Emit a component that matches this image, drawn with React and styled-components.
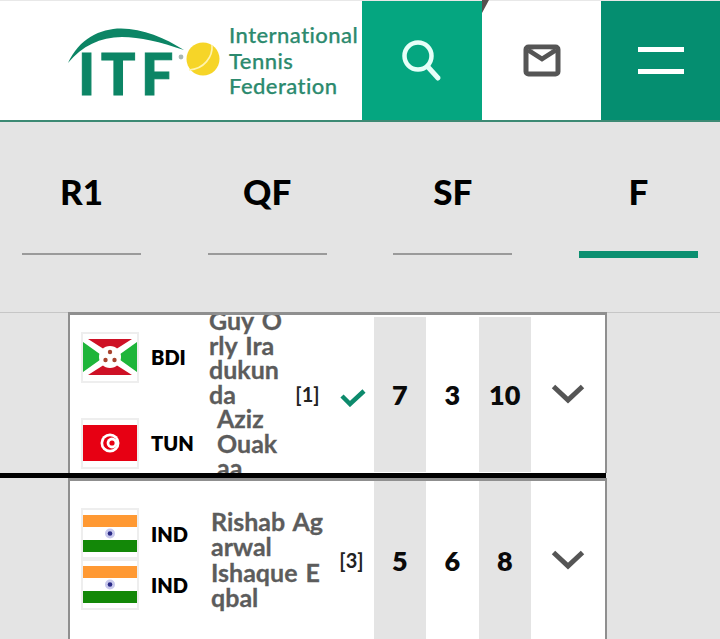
import React from "react";
import styled, { createGlobalStyle } from "styled-components";

const Global = createGlobalStyle`
  html, body { margin: 0; padding: 0; height: 639px; overflow: hidden; background: #e4e4e4; }
  body { font-family: Lato, "Noto Sans", sans-serif; }
  * { box-sizing: border-box; }
`;

const Page = styled.div`
  width: 720px;
  height: 639px;
  overflow: hidden;
  background: #e4e4e4;
`;

const Header = styled.header`
  position: relative;
  display: flex;
  height: 122px;
  background: #fff;
  border-top: 1px solid #e8e8e8;
  border-bottom: 2px solid #3c8a74;
`;

const Brand = styled.div`
  width: 362px;
  display: flex;
  align-items: flex-start;
  padding-left: 64px;
  overflow: hidden;
`;

const BrandName = styled.div`
  margin-left: 4px;
  padding-top: 21px;
  font-size: 22px;
  line-height: 25.5px;
  font-weight: 500;
  color: #2c8a6e;
  letter-spacing: 0.45px;
  white-space: nowrap;
  -webkit-text-stroke: 0.25px #2c8a6e;
`;

const NavButton = styled.div`
  width: ${(p) => p.$w}px;
  display: flex;
  align-items: center;
  justify-content: center;
  background: ${(p) => p.$bg};
`;

const Corner = styled.div`
  position: absolute;
  left: 482px;
  top: -1px;
  width: 7px;
  height: 13px;
  background: #55504f;
  clip-path: polygon(0 0, 100% 0, 0 100%);
`;

const Tabs = styled.nav`
  height: 190px;
  display: flex;
  justify-content: space-between;
  align-items: flex-start;
  padding: 0 22px;
  background: #e4e4e4;
`;

const Tab = styled.div`
  width: 119px;
  height: ${(p) => (p.$active ? 136 : 133)}px;
  padding-top: 49px;
  text-align: center;
  font-size: 35px;
  line-height: 40px;
  font-weight: 900;
  color: #000;
  border-bottom: ${(p) => (p.$active ? "7px solid #0b8f70" : "2px solid #9a9a9a")};
`;

const Rule = styled.div`
  height: 1px;
  background: #c6c6c6;
`;

const Match = styled.section`
  width: 539px;
  height: ${(p) => p.$h}px;
  margin-left: 68px;
  margin-top: ${(p) => (p.$first ? -1 : 0)}px;
  position: relative;
  display: flex;
  overflow: hidden;
  background: #fff;
  border-style: solid;
  border-color: #8f8f8f;
  border-width: 3px 2px 0 2px;
`;

const Players = styled.div`
  flex: 1;
  min-width: 0;
  display: flex;
  flex-direction: column;
  justify-content: center;
  padding-left: 11px;
  padding-bottom: ${(p) => p.$pb}px;
`;

const Player = styled.div`
  display: flex;
  flex-shrink: 0;
  align-items: center;
`;

const FlagBox = styled.div`
  width: 58px;
  height: 51px;
  flex-shrink: 0;
  display: flex;
  align-items: center;
  justify-content: center;
  background: #fff;
  border: 2px solid #eeeeee;
`;

const Code = styled.div`
  width: 70px;
  padding-left: 12px;
  flex-shrink: 0;
  font-size: 20px;
  font-weight: 800;
  color: #000;
`;

const Name = styled.div`
  width: ${(p) => p.$w}px;
  margin-left: ${(p) => p.$indent}px;
  font-size: 25px;
  line-height: 24.6px;
  font-weight: 700;
  color: #5c5c5c;
  word-break: break-all;
  word-spacing: 2px;
  -webkit-text-stroke: 0.3px #5c5c5c;
`;

const Meta = styled.div`
  display: flex;
  align-items: center;
  justify-content: flex-end;
  flex-shrink: 0;
`;

const Seed = styled.div`
  font-size: 20px;
  font-weight: 700;
  color: #222;
  margin-right: ${(p) => p.$gap}px;
`;

const Tick = styled.svg`
  width: 28px;
  height: 20px;
  margin-right: 7px;
  margin-top: 5px;
`;

const SetCell = styled.div`
  width: 52.5px;
  flex-shrink: 0;
  margin: ${(p) => (p.$flush ? "0" : "2px 0 1px")};
  display: flex;
  align-items: center;
  justify-content: center;
  font-size: 27px;
  font-weight: 800;
  color: #0a0a0a;
  background: ${(p) => (p.$shade ? "#e4e4e4" : "#fff")};
`;

const Toggle = styled.div`
  width: 74px;
  flex-shrink: 0;
  display: flex;
  align-items: center;
  justify-content: center;
`;

const Divider = styled.div`
  width: 606px;
  height: 5px;
  background: #000;
`;

const LogoMark = () => (
  <svg width="161" height="100" viewBox="64 0 161 100" style={{ flexShrink: 0 }}>
    <path d="M68 62 C 79 38, 100 27.5, 121 27.5 C 143 27.5, 165 37, 184 49 C 160 41, 140 36, 122 36 C 100 36, 82 45, 68 62 Z" fill="#0c8565" />
    <text y="94" fontFamily="Lato, sans-serif" fontWeight="900" fontSize="57" fill="#0c8565" stroke="#0c8565" strokeWidth="1">
      <tspan x="78">I</tspan>
      <tspan x="101">T</tspan>
      <tspan x="141">F</tspan>
    </text>
    <circle cx="181" cy="56" r="2.4" fill="#a9b7b3" />
    <circle cx="203" cy="58" r="16.5" fill="#f6d528" />
    <path d="M212 44 C 213 56, 204 68, 189 69" fill="none" stroke="#fff4b0" strokeWidth="1.6" />
  </svg>
);

const SearchIcon = () => (
  <svg width="44" height="46" viewBox="0 0 44 46">
    <circle cx="18" cy="18" r="13.5" fill="none" stroke="#e6fff8" strokeWidth="4.5" />
    <path d="M28 29 L38 40" stroke="#e6fff8" strokeWidth="5" strokeLinecap="round" />
  </svg>
);

const MailIcon = () => (
  <svg width="38" height="34" viewBox="0 0 38 34">
    <rect x="3" y="3" width="32" height="27" rx="2.5" fill="#fff" stroke="#555" strokeWidth="5" />
    <path d="M5 6 L19 15 L33 6" fill="none" stroke="#555" strokeWidth="4.5" />
    <path d="M10 5.5 H28 L19 11 Z" fill="#fff" />
  </svg>
);

const MenuIcon = () => (
  <svg width="46" height="28" viewBox="0 0 46 28">
    <rect x="0" y="0" width="46" height="5" fill="#fff" />
    <rect x="0" y="22" width="46" height="5" fill="#fff" />
  </svg>
);

const Burundi = () => (
  <svg width="54" height="36" viewBox="0 0 54 36">
    <rect width="54" height="36" fill="#fff" />
    <path d="M5 0 H49 L27 14 Z M5 36 H49 L27 22 Z" fill="#ce1126" />
    <path d="M0 3 L21 18 L0 33 Z M54 3 L33 18 L54 33 Z" fill="#1eb53a" />
    <circle cx="27" cy="18" r="11" fill="#fff" />
    <circle cx="27" cy="13" r="2.2" fill="#a8442f" />
    <circle cx="22.5" cy="21" r="2.2" fill="#a8442f" />
    <circle cx="31.5" cy="21" r="2.2" fill="#a8442f" />
  </svg>
);

const Tunisia = () => (
  <svg width="54" height="36" viewBox="0 0 54 36">
    <rect width="54" height="36" fill="#e70013" />
    <circle cx="27" cy="18" r="9.5" fill="#fff" />
    <circle cx="27" cy="18" r="6.8" fill="#e70013" />
    <circle cx="29" cy="18" r="5.4" fill="#fff" />
    <circle cx="29" cy="18" r="2.6" fill="#e70013" />
  </svg>
);

const India = () => (
  <svg width="54" height="37" viewBox="0 0 54 37">
    <rect width="54" height="12" fill="#ff9933" />
    <rect y="12" width="54" height="13" fill="#fff" />
    <rect y="25" width="54" height="12" fill="#138808" />
    <circle cx="27" cy="18.5" r="5" fill="#c9c9ec" />
    <circle cx="27" cy="18.5" r="2.3" fill="#2a2a86" />
  </svg>
);

const Chevron = () => (
  <svg width="34" height="20" viewBox="0 0 34 20">
    <path d="M2.5 2.5 L17 16 L31.5 2.5" fill="none" stroke="#555" strokeWidth="5" />
  </svg>
);

const flags = { BDI: Burundi, TUN: Tunisia, IND: India };

const matches = [
  {
    h: 161,
    pb: 0,
    seed: "[1]",
    won: true,
    sets: ["7", "3", "10"],
    players: [
      { code: "BDI", name: "Guy Orly Iradukunda", w: 74, indent: 0 },
      { code: "TUN", name: "Aziz Ouakaa", w: 62, indent: 8 },
    ],
  },
  {
    h: 161,
    pb: 2,
    seed: "[3]",
    won: false,
    sets: ["5", "6", "8"],
    players: [
      { code: "IND", name: "Rishab Agarwal", w: 118, indent: 2 },
      { code: "IND", name: "Ishaque Eqbal", w: 118, indent: 2 },
    ],
  },
];

export default function App() {
  return (
    <Page>
      <Global />
      <Header>
        <Brand>
          <LogoMark />
          <BrandName>
            International
            <br />
            Tennis
            <br />
            Federation
          </BrandName>
        </Brand>
        <NavButton $w={120} $bg="#05a680"><SearchIcon /></NavButton>
        <NavButton $w={119} $bg="#fff"><MailIcon /></NavButton>
        <NavButton $w={119} $bg="#058e70"><MenuIcon /></NavButton>
        <Corner />
      </Header>
      <Tabs>
        {["R1", "QF", "SF", "F"].map((t) => (
          <Tab key={t} $active={t === "F"}>{t}</Tab>
        ))}
      </Tabs>
      <Rule />
      {matches.map((m, i) => (
        <React.Fragment key={i}>
          <Match $h={m.h} $first={i === 0}>
            <Players $pb={m.pb}>
              {m.players.map((p, j) => {
                const Flag = flags[p.code];
                return (
                  <Player key={j}>
                    <FlagBox><Flag /></FlagBox>
                    <Code>{p.code}</Code>
                    <Name $w={p.w} $indent={p.indent}>{p.name}</Name>
                  </Player>
                );
              })}
            </Players>
            <Meta>
              <Seed $gap={m.won ? 19 : 10}>{m.seed}</Seed>
              {m.won && (
                <Tick viewBox="0 0 28 20">
                  <path d="M3 9 L11 17 L25 4" fill="none" stroke="#0d8a6c" strokeWidth="4.5" />
                </Tick>
              )}
            </Meta>
            {m.sets.map((s, k) => (
              <SetCell key={k} $shade={k !== 1} $flush={i === 1}>{s}</SetCell>
            ))}
            <Toggle><Chevron /></Toggle>
          </Match>
          {i === 0 && <Divider />}
        </React.Fragment>
      ))}
    </Page>
  );
}
